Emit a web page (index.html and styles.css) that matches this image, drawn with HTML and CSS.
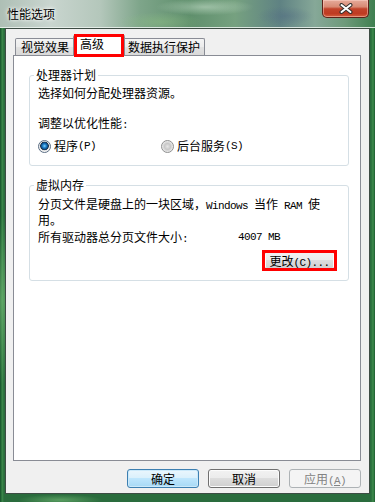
FILE: index.html
```html
<!DOCTYPE html>
<html lang="zh-CN">
<head>
    <meta charset="UTF-8">
    <meta name="viewport" content="width=device-width, initial-scale=1.0">
    <title>性能选项</title>
    <link rel="stylesheet" href="styles.css">
</head>
<body>
    <div class="window">
        <div class="titlebar">
            <span class="title">性能选项</span>
            <button class="close" aria-label="关闭">
                <svg width="14" height="11" viewBox="0 0 14 11">
                    <path d="M2.5 2 L11.5 9 M11.5 2 L2.5 9" stroke="#33302e" stroke-width="4" stroke-linecap="round"/>
                    <path d="M2.5 2 L11.5 9 M11.5 2 L2.5 9" stroke="#ffffff" stroke-width="2" stroke-linecap="round"/>
                </svg>
            </button>
        </div>

        <div class="client">
            <div class="tabs">
                <div class="tab">视觉效果</div>
                <div class="tab active">高级</div>
                <div class="tab">数据执行保护</div>
            </div>

            <div class="panel">
                <fieldset class="group group-cpu">
                    <legend>处理器计划</legend>
                    <p>选择如何分配处理器资源。</p>
                    <p class="adjust">调整以优化性能<span class="en">:</span></p>
                    <div class="radios">
                        <label class="option"><span class="radio checked"></span>程序<span class="en">(P)</span></label>
                        <label class="option"><span class="radio"></span>后台服务<span class="en">(S)</span></label>
                    </div>
                </fieldset>

                <fieldset class="group group-mem">
                    <legend>虚拟内存</legend>
                    <p class="note">分页文件是硬盘上的一块区域，<span class="en">Windows </span>当作<span class="en"> RAM </span>使<br>用。</p>
                    <div class="size">
                        <span class="size-label">所有驱动器总分页文件大小<span class="en">:</span></span>
                        <span class="en">4007 MB</span>
                    </div>
                    <div class="actions">
                        <button class="btn btn-change marked">更改<span class="en">(C)...</span></button>
                    </div>
                </fieldset>
            </div>

            <div class="footer">
                <button class="btn default">确定</button>
                <button class="btn">取消</button>
                <button class="btn" disabled>应用<span class="en">(<u>A</u>)</span></button>
            </div>
        </div>
    </div>
</body>
</html>
```

FILE: styles.css
```css
body {
    margin: 0;
    font-family: "Noto Sans CJK SC", sans-serif;
    font-size: 12px;
    color: #000;
}
.window {
    width: 375px;
    height: 502px;
    display: flex;
    flex-direction: column;
    background:
        radial-gradient(ellipse 40px 120px at 2px 300px, rgba(120, 190, 120, 0.6), transparent 70%),
        radial-gradient(ellipse 60px 8px at 60px 500px, rgba(120, 190, 120, 0.6), transparent 70%),
        linear-gradient(to right, #1c5a30 0, #1c5a30 1px, #3e8c4c 2px, #2a6c3d 4px, #2a6c3d calc(100% - 4px), #3e8c4c calc(100% - 2px), #1c5a30 100%);
}
.titlebar {
    height: 27px;
    border-bottom: 1px solid rgba(236, 243, 239, 0.85);
    display: flex;
    justify-content: space-between;
    align-items: flex-start;
    padding-left: 7px;
    background:
        radial-gradient(ellipse 70px 12px at 205px 7px, rgba(200, 225, 205, 0.55), transparent 70%),
        radial-gradient(ellipse 40px 14px at 285px 16px, rgba(80, 105, 130, 0.45), transparent 70%),
        radial-gradient(ellipse 60px 14px at 160px 22px, rgba(140, 190, 130, 0.5), transparent 70%),
        linear-gradient(to right, #aebfb5 0, #c9d5cf 50px, #b4c7bb 100px, #7ea58a 140px, #5f8f6c 190px, #76a180 235px, #5f8283 280px, #86a898 315px, #6d9a7a 345px, #3f7f50 375px);
}
.title {
    line-height: 27px;
    text-shadow: 0 0 5px #fff, 0 0 3px #fff;
}
.close {
    width: 47px;
    height: 18px;
    margin-right: 6px;
    padding: 0;
    display: flex;
    align-items: center;
    justify-content: center;
    border: 1px solid #5c2219;
    border-top: none;
    border-radius: 0 0 5px 5px;
    background: linear-gradient(#e6ab9b 0, #d88a74 40%, #c2432a 52%, #bf3b22 80%, #d4603f 100%);
    box-shadow: inset 0 0 0 1px rgba(255, 220, 210, 0.45);
}
.client {
    flex: 1;
    margin: 0 5px 8px;
    border: 1px solid #3d4c44;
    background: #f0f0f0;
    padding: 6px 8px 5px 7px;
    display: flex;
    flex-direction: column;
}
.tabs {
    display: flex;
    align-items: flex-end;
    height: 21px;
    margin: 0 0 -1px 2px;
}
.tab {
    height: 16px;
    line-height: 16px;
    padding: 0 4px;
    margin-bottom: 1px;
    border: 1px solid #898c95;
    border-bottom: none;
    border-radius: 2px 2px 0 0;
    background: linear-gradient(#f4f4f4, #ececec 50%, #e2e2e2 50%, #d9d9d9);
    white-space: nowrap;
}
.tab:first-child {
    padding: 0 5px;
}
.tab.active {
    position: relative;
    z-index: 1;
    height: 19px;
    line-height: 14px;
    padding: 1px 20px 0 6px;
    margin: 0 -2px;
    background: #fff;
}
.tab.active::after,
.marked::after {
    content: "";
    position: absolute;
    border: 3px solid #f00;
}
.tab.active::after {
    top: -2px;
    bottom: -1px;
    left: 0;
    right: 0;
}
.panel {
    flex: 1;
    border: 1px solid #898c95;
    background: #fff;
    padding: 13px 11px 0 15px;
}
.group {
    margin: 0;
    min-width: 0;
    border: 1px solid #d5dfe5;
    border-radius: 3px;
    padding: 5px 13px 12px 8px;
}
.group legend {
    padding: 0 2px;
    margin-left: -4px;
    line-height: 12px;
}
.group p {
    margin: 0;
    line-height: 14px;
}
.en {
    font-family: "Liberation Mono", monospace;
    font-size: 11px;
    letter-spacing: -0.6px;
}
.group-cpu .adjust {
    margin-top: 16px;
}
.radios {
    display: flex;
    margin-top: 7px;
    line-height: 14px;
}
.option {
    display: flex;
    align-items: center;
    width: 123px;
}
.radio {
    width: 13px;
    height: 13px;
    box-sizing: border-box;
    margin-right: 3px;
    border: 1px solid #8e8f8f;
    border-radius: 50%;
    background: radial-gradient(circle at 50% 50%, #e6e6e6 0, #c8c8c8 3px, #dcdcdc 4.5px, #f7f7f7 6px);
}
.radio.checked {
    border-color: #5b6e84;
    background: radial-gradient(circle at 50% 45%, #8fd3f7 0, #2a8fd6 1.5px, #0d5698 3px, #1f3348 4px, #e3e3e3 4.6px, #fbfbfb 6px);
}
.group-mem {
    margin-top: 13px;
    padding-top: 6px;
    padding-bottom: 10px;
}
.group-mem .note {
    line-height: 13px;
}
.size {
    display: flex;
    margin-top: 5px;
    line-height: 12px;
}
.size-label {
    width: 200px;
}
.actions {
    display: flex;
    justify-content: flex-end;
    margin-top: 6px;
}
.btn {
    box-sizing: border-box;
    width: 72px;
    height: 19px;
    padding: 0;
    font: inherit;
    line-height: 17px;
    color: #000;
    border: 1px solid #707070;
    border-radius: 3px;
    background: linear-gradient(#f2f2f2, #ebebeb 50%, #dddddd 50%, #cfcfcf);
    box-shadow: inset 0 0 0 1px #fcfcfc;
}
.btn-change {
    position: relative;
    width: 71px;
}
.marked::after {
    top: -2px;
    bottom: -2px;
    left: -3px;
    right: -3px;
}
.btn.default {
    border-color: #3c7fb1;
    background: linear-gradient(#eaf6fd, #d9f0fc 50%, #bee6fd 50%, #a7d9f5);
    box-shadow: inset 0 0 0 1px #cbe9fa;
}
.btn:disabled {
    border-color: #adb2b5;
    background: #f4f4f4;
    color: #838383;
    box-shadow: none;
}
.footer {
    display: flex;
    justify-content: flex-end;
    gap: 9px;
    padding-top: 8px;
}
```
